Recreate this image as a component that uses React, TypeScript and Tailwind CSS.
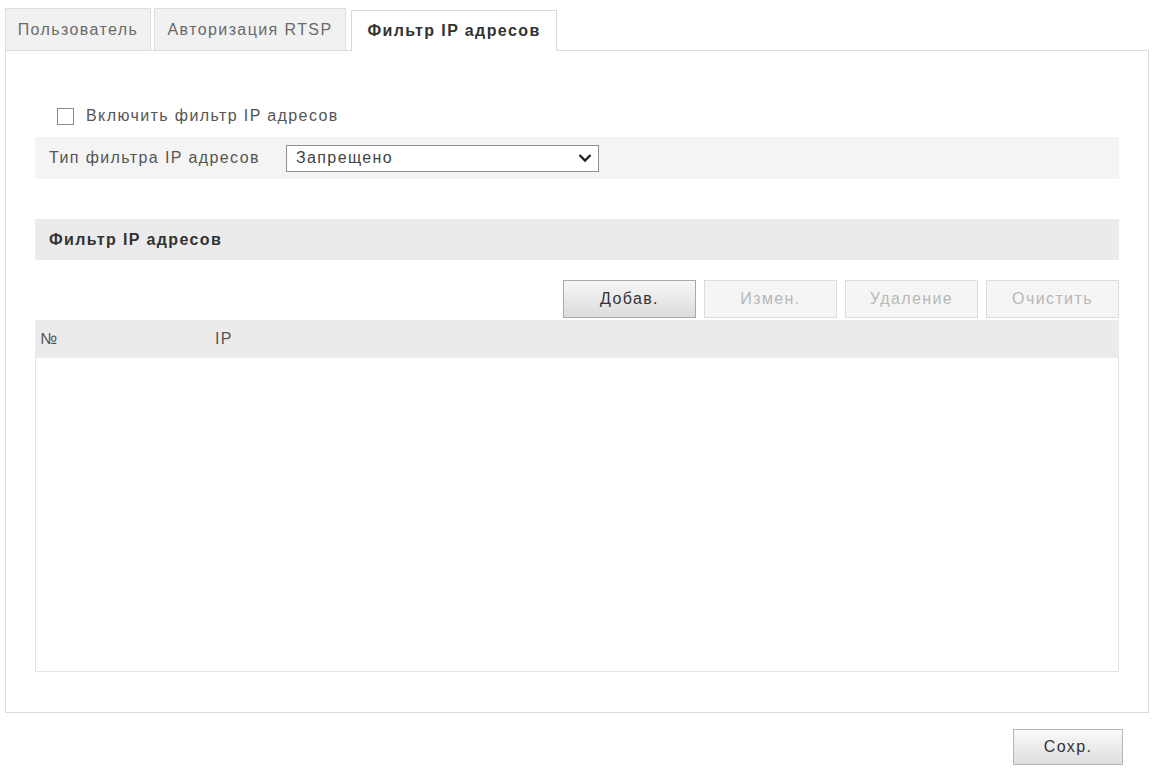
import React, { useState } from 'react';

const tabs = ['Пользователь', 'Авторизация RTSP', 'Фильтр IP адресов'];
const actions = [
    { label: 'Добав.', enabled: true },
    { label: 'Измен.', enabled: false },
    { label: 'Удаление', enabled: false },
    { label: 'Очистить', enabled: false },
];

export default function App() {
    const [active, setActive] = useState(2);
    const [enabled, setEnabled] = useState(false);

    return (
        <div className="w-[1159px] h-[773px] bg-white text-[16px] tracking-[1.4px] text-[#4a4a4a] font-['Liberation_Sans',Arial,sans-serif] pl-[5px] pr-[10px] pt-[8px]">
            {/* tabs */}
            <div className="flex items-end h-[42px] gap-[3px]">
                {tabs.map((tab, i) =>
                    i === active ? (
                        <button
                            key={tab}
                            onClick={() => setActive(i)}
                            className="relative -mb-px h-[41px] w-[206px] ml-[2px] border border-b-0 border-[#d9d9d9] bg-white font-bold text-[#333] z-10"
                        >
                            {tab}
                        </button>
                    ) : (
                        <button
                            key={tab}
                            onClick={() => setActive(i)}
                            className={`h-[42px] border border-b-0 border-[#dedede] bg-[#f1f1f1] text-[#6a6a6a] ${i === 0 ? 'w-[146px]' : 'w-[192px]'}`}
                        >
                            {tab}
                        </button>
                    )
                )}
            </div>

            {/* panel */}
            <div className="w-[1144px] h-[663px] border border-[#dcdcdc] pl-[29px] pr-[29px] pt-[46px]">
                <label className="flex items-center h-[38px] pl-[22px] gap-[12px] text-[#555] cursor-pointer">
                    <span
                        onClick={() => setEnabled(!enabled)}
                        className="w-[17px] h-[17px] border border-[#8a8a8a] bg-white flex items-center justify-center text-[12px] leading-none"
                    >
                        {enabled ? '✓' : ''}
                    </span>
                    Включить фильтр IP адресов
                </label>

                <div className="mt-[2px] h-[42px] bg-[#f4f4f4] flex items-center pl-[14px] gap-[26px]">
                    <span className="text-[#555]">Тип фильтра IP адресов</span>
                    <div className="w-[313px] h-[27px] border border-[#8f8f8f] bg-white flex items-center justify-between pl-[9px] pr-[6px]">
                        <span className="text-[#444]">Запрещено</span>
                        <svg width="14" height="10" viewBox="0 0 14 10">
                            <path d="M1.5 2 L7 7.5 L12.5 2" fill="none" stroke="#222" strokeWidth="2.4" />
                        </svg>
                    </div>
                </div>

                <div className="mt-[40px] h-[41px] bg-[#ebebeb] flex items-center pl-[14px] font-bold text-[#333]">
                    Фильтр IP адресов
                </div>

                <div className="mt-[20px] flex justify-end gap-[8px] pr-0">
                    {actions.map(a => (
                        <button
                            key={a.label}
                            disabled={!a.enabled}
                            className={`h-[38px] w-[133px] border ${
                                a.enabled
                                    ? 'border-[#a9a9a9] bg-gradient-to-b from-[#f7f7f7] to-[#dcdcdc] text-[#333]'
                                    : 'border-[#dcdcdc] bg-[#f5f5f5] text-[#b8b8b8]'
                            }`}
                        >
                            {a.label}
                        </button>
                    ))}
                </div>

                <div className="mt-[2px]">
                    <div className="h-[38px] bg-[#ebebeb] flex items-center text-[#555]">
                        <span className="w-[180px] pl-[5px]">№</span>
                        <span>IP</span>
                    </div>
                    <div className="h-[314px] border border-t-0 border-[#e3e3e3] bg-white" />
                </div>
            </div>

            <div className="flex justify-end pr-[26px] pt-[16px]">
                <button className="h-[36px] w-[110px] border border-[#b5b5b5] bg-gradient-to-b from-[#fafafa] to-[#dedede] text-[#333]">
                    Сохр.
                </button>
            </div>
        </div>
    );
}
